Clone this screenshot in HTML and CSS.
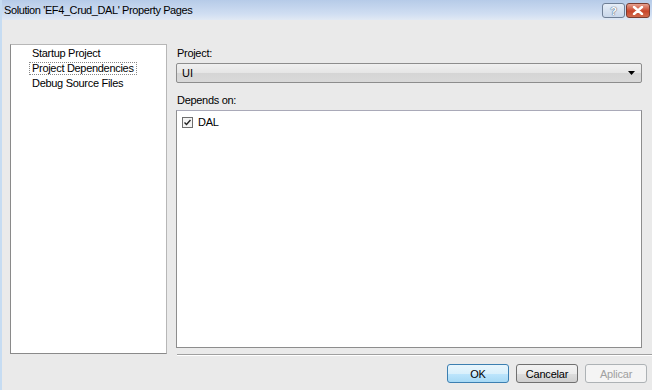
FILE: index.html
```html
<!DOCTYPE html>
<html lang="en">

<head>
    <meta charset="UTF-8">
    <title>Solution 'EF4_Crud_DAL' Property Pages</title>
    <link rel="stylesheet" href="styles.css">
</head>

<body>
    <div class="window">
        <div class="titlebar">
            <span class="title">Solution 'EF4_Crud_DAL' Property Pages</span>
            <div class="caption-buttons">
                <div class="cap-btn help">?</div>
                <div class="cap-btn close">
                    <svg width="12" height="9" viewBox="0 0 12 9">
                        <path d="M2 1 L10 8 M10 1 L2 8" stroke="#fff" stroke-width="2.4" stroke-linecap="round" />
                    </svg>
                </div>
            </div>
        </div>

        <div class="main">
            <div class="nav">
                <div class="nav-item">Startup Project</div>
                <div class="nav-item"><span class="selected">Project Dependencies</span></div>
                <div class="nav-item">Debug Source Files</div>
            </div>

            <div class="content">
                <div class="label">Project:</div>
                <div class="combo">
                    <span>UI</span>
                    <svg class="arrow" width="7" height="4" viewBox="0 0 7 4">
                        <path d="M0 0 H7 L3.5 4 Z" fill="#000" />
                    </svg>
                </div>
                <div class="label depends">Depends on:</div>
                <div class="listbox">
                    <label class="check-row">
                        <span class="checkbox">
                            <svg width="7" height="7" viewBox="0 0 7 7">
                                <path d="M0.5 3.5 L2.5 5.5 L6.5 1" stroke="#222" stroke-width="1.4" fill="none" />
                            </svg>
                        </span>
                        DAL
                    </label>
                </div>
            </div>
        </div>

        <div class="footer">
            <div class="separator"></div>
            <div class="buttons">
                <button class="btn default">OK</button>
                <button class="btn">Cancelar</button>
                <button class="btn disabled">Aplicar</button>
            </div>
        </div>
    </div>
</body>

</html>
```

FILE: styles.css
```css
body {
    margin: 0;
    font-family: 'Liberation Sans', Arial, sans-serif;
    font-size: 11px;
    color: #000;
}

.window {
    width: 652px;
    height: 390px;
    box-sizing: border-box;
    background: #eaeaea;
    border-left: 2px solid #c6dcf2;
    overflow: hidden;
}

.titlebar {
    height: 20px;
    display: flex;
    align-items: center;
    justify-content: space-between;
    background: linear-gradient(to bottom, #b6cbe8, #d0def2 70%, #e1e9f4);
    padding-left: 2px;
}

.title {
    font-size: 11px;
    letter-spacing: -0.4px;
    color: #000;
}

.caption-buttons {
    display: flex;
    gap: 1px;
    margin-right: 2px;
    margin-top: 1px;
}

.cap-btn {
    height: 13px;
    border: 1px solid #6f7f96;
    border-radius: 3px;
    display: flex;
    align-items: center;
    justify-content: center;
}

.help {
    width: 21px;
    background: linear-gradient(to bottom, #e6eef8, #c9d7ea);
    color: #fff;
    font-weight: bold;
    font-size: 11px;
    text-shadow: 0 0 1px #3f5572, 0 0 1px #3f5572;
}

.close {
    width: 22px;
    background: linear-gradient(to bottom, #e6a190, #c8452b 55%, #d06a4e);
    border-color: #7a3b30;
}

.main {
    display: flex;
    padding: 24px 10px 0 8px;
    gap: 9px;
}

.nav {
    width: 155px;
    height: 307px;
    background: #fff;
    border: 1px solid #8a8a8a;
    border-right-color: #b7b7b7;
    border-top-color: #b7b7b7;
    padding-top: 1px;
}

.nav-item {
    height: 15px;
    line-height: 15px;
    padding-left: 21px;
    letter-spacing: -0.3px;
    white-space: nowrap;
}

.nav-item .selected {
    margin-left: -3px;
    padding: 0 2px;
    border: 1px dotted #888;
    line-height: 11px;
    display: inline-block;
    vertical-align: top;
    margin-top: 1px;
}

.content {
    flex: 1;
    padding-top: 1px;
}

.label {
    height: 18px;
    line-height: 17px;
    padding-left: 1px;
    letter-spacing: -0.3px;
}

.depends {
    margin-top: 9px;
}

.combo {
    height: 18px;
    border: 1px solid #8d8d8d;
    border-radius: 2px;
    background: linear-gradient(to bottom, #f0f0f0, #e5e5e5 50%, #d5d5d5 51%, #d9d9d9);
    display: flex;
    align-items: center;
    justify-content: space-between;
    padding: 0 6px 0 5px;
}

.listbox {
    height: 231px;
    background: #fff;
    border: 1px solid #8d8d8d;
    border-top-color: #a9a9b8;
    padding: 5px 0 0 5px;
}

.check-row {
    display: flex;
    align-items: center;
    gap: 5px;
    letter-spacing: -0.3px;
}

.checkbox {
    width: 9px;
    height: 9px;
    border: 1px solid #6e6e6e;
    background: #f4f4f4;
    display: flex;
    align-items: center;
    justify-content: center;
}

.footer {
    padding-left: 175px;
}

.separator {
    margin-top: 0;
    height: 1px;
    background: #a0a0a0;
    border-bottom: 1px solid #fff;
}

.buttons {
    display: flex;
    justify-content: flex-end;
    gap: 7px;
    padding: 8px 5px 0 0;
}

.btn {
    width: 62px;
    height: 19px;
    font-family: 'Liberation Sans', Arial, sans-serif;
    font-size: 11px;
    letter-spacing: -0.2px;
    border: 1px solid #707070;
    border-radius: 3px;
    background: linear-gradient(to bottom, #f2f2f2, #ebebeb 50%, #dddddd 51%, #cfcfcf);
    padding: 0;
    color: #000;
}

.btn.default {
    border-color: #3c7fb1;
    background: linear-gradient(to bottom, #e9f6fd, #d9f0fc 50%, #bee6fd 51%, #a7d9f5);
}

.btn.disabled {
    border-color: #adb2b5;
    background: #f4f4f4;
    color: #a0a0a0;
}
```
